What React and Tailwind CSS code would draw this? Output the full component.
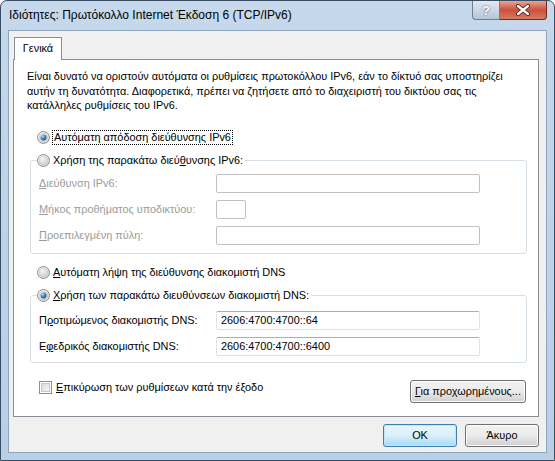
import React from 'react';

function Radio({ checked }) {
  return (
    <svg width="13" height="13" viewBox="0 0 13 13" className="shrink-0">
      <defs>
        <radialGradient id="rbOuter" cx="0.35" cy="0.3" r="0.8">
          <stop offset="0" stopColor="#ffffff" />
          <stop offset="1" stopColor="#d4d4d4" />
        </radialGradient>
        <radialGradient id="rbInner" cx="0.35" cy="0.3" r="0.8">
          <stop offset="0" stopColor="#f4f4f4" />
          <stop offset="1" stopColor="#cfcfcf" />
        </radialGradient>
        <radialGradient id="rbDot" cx="0.35" cy="0.3" r="0.8">
          <stop offset="0" stopColor="#a9dcf7" />
          <stop offset="0.5" stopColor="#3e88c4" />
          <stop offset="1" stopColor="#17517f" />
        </radialGradient>
      </defs>
      <circle cx="6.5" cy="6.5" r="6" fill="url(#rbOuter)" stroke="#8e8f8f" />
      <circle cx="6.5" cy="6.5" r="4.2" fill="url(#rbInner)" stroke="#c2c2c2" strokeWidth="0.6" />
      {checked && <circle cx="6.5" cy="6.5" r="3" fill="url(#rbDot)" />}
    </svg>
  );
}

function Checkbox() {
  return (
    <span className="flex h-[13px] w-[13px] shrink-0 items-center justify-center border border-[#8e8f8f] bg-white">
      <span className="h-[9px] w-[9px] border border-[#c6c6c6] bg-linear-to-br from-[#d9d9d9] to-[#f7f7f7]" />
    </span>
  );
}

function Field({ label, value, disabled, short }) {
  return (
    <div className="flex h-[19px] items-center">
      <span className={`w-[177px] whitespace-nowrap ${disabled ? 'text-[#9b9b9b]' : 'text-black'}`}>
        {label}
      </span>
      <div
        className={`flex h-[19px] items-center rounded-[2px] border bg-white pl-[4px] ${
          short ? 'w-[30px]' : 'w-[264px]'
        } ${disabled ? 'border-[#c1c1c1]' : 'border-[#abadb3] border-b-[#dbdfe6] border-x-[#e2e3ea]'}`}
      >
        {value}
      </div>
    </div>
  );
}

function Button({ children, primary, className = '' }) {
  return (
    <div
      className={`flex h-[23px] items-center justify-center whitespace-nowrap rounded-[3px] border ${
        primary
          ? 'border-[#3c7fb1] bg-linear-to-b from-[#eaf6fd] via-[#d9f0fc] to-[#a7d9f5] shadow-[inset_0_0_0_1px_#c6e6f8]'
          : 'border-[#707070] bg-linear-to-b from-[#f2f2f2] via-[#ebebeb] to-[#cfcfcf] shadow-[inset_0_0_0_1px_#fcfcfc]'
      } ${className}`}
    >
      {children}
    </div>
  );
}

export default function App() {
  return (
    <div className="h-[461px] w-[555px] overflow-hidden bg-white font-['Liberation_Sans',Arial,sans-serif] text-[10.9px] leading-[15px] text-black">
      <div className="flex h-full flex-col rounded-t-[7px] border border-[#3a4c61] bg-linear-to-b from-[#c5d8ec] via-[#bfd3e8] to-[#b9cfe6] px-[7px] pb-[7px]">
        {/* title bar */}
        <div className="flex h-[29px] shrink-0 items-start justify-between">
          <span className="pl-[1px] pt-[7px] text-[12px] whitespace-nowrap">
            Ιδιότητες: Πρωτόκολλο Internet Έκδοση 6 (TCP/IPv6)
          </span>
          <div className="flex">
            <div className="flex h-[19px] w-[28px] items-center justify-center rounded-bl-[4px] border border-t-0 border-[#6f7f92] bg-linear-to-b from-[#e1e9f2] to-[#b7c6d6] text-[13px] font-bold text-white [text-shadow:0_0_2px_#3a4a5c]">
              ?
            </div>
            <div className="flex h-[19px] w-[47px] items-center justify-center rounded-br-[4px] border border-t-0 border-l-0 border-[#6e2a24] bg-linear-to-b from-[#e8a493] via-[#c9503c] to-[#d77b5e]">
              <svg width="16" height="12" viewBox="0 0 16 12">
                <path d="M3 2 L13 10 M13 2 L3 10" stroke="#4a1510" strokeWidth="4" strokeLinecap="round" />
                <path d="M3 2 L13 10 M13 2 L3 10" stroke="#ffffff" strokeWidth="2.4" strokeLinecap="round" />
              </svg>
            </div>
          </div>
        </div>

        {/* client area */}
        <div className="flex flex-1 flex-col border border-[#8fa5bc] bg-[#f0f0f0] pl-[4px] pr-[7px] pt-[6px]">
          {/* tab strip */}
          <div className="flex pl-[1px]">
            <div className="relative z-10 -mb-px flex h-[23px] w-[48px] items-center justify-center border border-b-0 border-[#898c95] bg-white pb-[1px]">
              Γενικά
            </div>
          </div>

          {/* tab panel */}
          <div className="flex h-[358px] flex-col border border-[#898c95] bg-white pl-[13px] pr-[12px] pt-[9px]">
            <p className="whitespace-nowrap leading-[14.5px]">
              Είναι δυνατό να οριστούν αυτόματα οι ρυθμίσεις πρωτοκόλλου IPv6, εάν το δίκτυό σας υποστηρίζει
              <br />
              αυτήν τη δυνατότητα. Διαφορετικά, πρέπει να ζητήσετε από το διαχειριστή του δικτύου σας τις
              <br />
              κατάλληλες ρυθμίσεις του IPv6.
            </p>

            <div className="ml-[10px] mt-[17px] flex h-[16px] items-center gap-[2px]">
              <Radio checked />
              <span className="border border-dotted border-black px-[1px] leading-[13px]">
                Αυτόματη απόδοση διεύθυνσης IPv6
              </span>
            </div>

            <fieldset className="ml-[3px] mr-[-1px] mt-[7px] rounded-[3px] border border-[#d5dfe5] pb-[8px]">
              <legend className="ml-[6px] flex h-[16px] items-center gap-[3px] pr-[2px]">
                <Radio />
                <span>
                  Χρήση της παρακάτω διεύ<span className="underline">θ</span>υνσης IPv6:
                </span>
              </legend>
              <div className="mt-[5px] flex flex-col gap-[7px] pl-[8px]">
                <Field
                  disabled
                  label={
                    <>
                      <span className="underline">Δ</span>ιεύθυνση IPv6:
                    </>
                  }
                />
                <Field
                  disabled
                  short
                  label={
                    <>
                      <span className="underline">Μ</span>ήκος προθήματος υποδικτύου:
                    </>
                  }
                />
                <Field
                  disabled
                  label={
                    <>
                      <span className="underline">Π</span>ροεπιλεγμένη πύλη:
                    </>
                  }
                />
              </div>
            </fieldset>

            <div className="ml-[10px] mt-[11px] flex h-[16px] items-center gap-[3px]">
              <Radio />
              <span>
                <span className="underline">Α</span>υτόματη λήψη της διεύθυνσης διακομιστή DNS
              </span>
            </div>

            <fieldset className="ml-[3px] mr-[-1px] mt-[7px] rounded-[3px] border border-[#d5dfe5] pb-[6px]">
              <legend className="ml-[6px] flex h-[16px] items-center gap-[3px] pr-[2px]">
                <Radio checked />
                <span>
                  <span className="underline">Χ</span>ρήση των παρακάτω διευθύνσεων διακομιστή DNS:
                </span>
              </legend>
              <div className="mt-[7px] flex flex-col gap-[7px] pl-[8px]">
                <Field
                  value="2606:4700:4700::64"
                  label={
                    <>
                      Π<span className="underline">ρ</span>οτιμώμενος διακομιστής DNS:
                    </>
                  }
                />
                <Field
                  value="2606:4700:4700::6400"
                  label={
                    <>
                      Ε<span className="underline">φ</span>εδρικός διακομιστής DNS:
                    </>
                  }
                />
              </div>
            </fieldset>

            <div className="mt-[17px] flex items-start justify-between pl-[12px]">
              <div className="flex h-[16px] items-center gap-[4px]">
                <Checkbox />
                <span>
                  <span className="underline">Ε</span>πικύρωση των ρυθμίσεων κατά την έξοδο
                </span>
              </div>
              <Button className="w-[116px]">
                <span>
                  <span className="underline">Γ</span>ια προχωρημένους...
                </span>
              </Button>
            </div>
          </div>

          {/* dialog buttons */}
          <div className="mt-[7px] flex justify-end gap-[8px]">
            <Button primary className="w-[74px]">
              OK
            </Button>
            <Button className="w-[74px]">Άκυρο</Button>
          </div>
        </div>
      </div>
    </div>
  );
}
